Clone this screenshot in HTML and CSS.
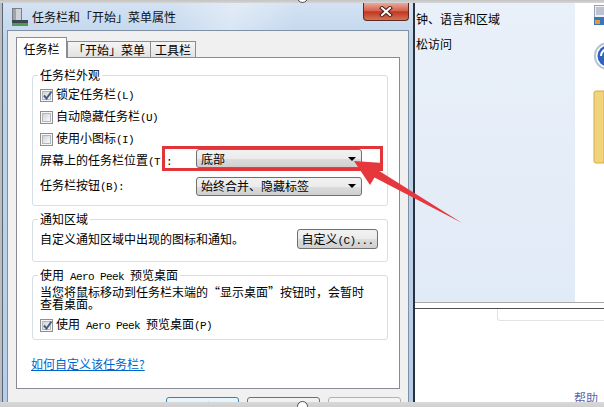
FILE: index.html
```html
<!DOCTYPE html>
<html lang="zh-CN">
<head>
    <meta charset="UTF-8">
    <meta name="viewport" content="width=device-width, initial-scale=1.0">
    <title>任务栏和「开始」菜单属性</title>
    <link rel="stylesheet" href="styles.css">
</head>
<body>
    <div class="screen">
        <div class="band-top"></div>

        <div class="desk">
            <div class="dialog">
                <div class="titlebar">
                    <svg class="app-icon" width="16" height="18" viewBox="0 0 16 18">
                        <rect x="0.5" y="0.5" width="9" height="13" fill="#cfd2d6" stroke="#7a7f86"/>
                        <rect x="1" y="1" width="3" height="12" fill="#9fa4aa"/>
                        <rect x="0" y="12" width="16" height="4" fill="#3b4550"/>
                        <rect x="0" y="15" width="16" height="3" fill="#4f9a52"/>
                    </svg>
                    <span class="title">任务栏和「开始」菜单属性</span>
                    <div class="close-btn">
                        <svg width="14" height="11" viewBox="0 0 14 11">
                            <path d="M3 2 L11 9 M11 2 L3 9" stroke="#4a1d15" stroke-width="4" stroke-linecap="square"/>
                            <path d="M3 2 L11 9 M11 2 L3 9" stroke="#fff" stroke-width="2" stroke-linecap="square"/>
                        </svg>
                    </div>
                </div>

                <div class="client">
                    <div class="tabs">
                        <div class="tab selected">任务栏</div>
                        <div class="tab">「开始」菜单</div>
                        <div class="tab last">工具栏</div>
                    </div>

                    <div class="tab-page">
                        <fieldset class="group group-look">
                            <legend>任务栏外观</legend>
                            <div class="row">
                                <span class="cb"><span class="cb-in"><svg class="tick" width="11" height="11" viewBox="0 0 11 11"><path d="M2 5.5 L4.5 8.5 L9.5 1.5" fill="none" stroke="#4b5d86" stroke-width="2"/></svg></span></span>
                                <span>锁定任务栏<span class="en">(L)</span></span>
                            </div>
                            <div class="row">
                                <span class="cb"><span class="cb-in"></span></span>
                                <span>自动隐藏任务栏<span class="en">(U)</span></span>
                            </div>
                            <div class="row">
                                <span class="cb"><span class="cb-in"></span></span>
                                <span>使用小图标<span class="en">(I)</span></span>
                            </div>
                            <div class="row field">
                                <span class="label">屏幕上的任务栏位置<span class="en">(T):</span></span>
                                <div class="combo combo-pos"><span>底部</span><i class="caret"></i></div>
                            </div>
                            <div class="row field field-buttons">
                                <span class="label">任务栏按钮<span class="en">(B):</span></span>
                                <div class="combo"><span>始终合并、隐藏标签</span><i class="caret"></i></div>
                            </div>
                        </fieldset>

                        <fieldset class="group group-notify">
                            <legend>通知区域</legend>
                            <div class="row">
                                <span>自定义通知区域中出现的图标和通知。</span>
                                <div class="btn btn-custom">自定义<span class="en">(C)...</span></div>
                            </div>
                        </fieldset>

                        <fieldset class="group group-peek">
                            <legend>使用<span class="en"> Aero Peek </span>预览桌面</legend>
                            <p class="note">当您将鼠标移动到任务栏末端的“显示桌面”按钮时，会暂时<br>查看桌面。</p>
                            <div class="row">
                                <span class="cb"><span class="cb-in"><svg class="tick" width="11" height="11" viewBox="0 0 11 11"><path d="M2 5.5 L4.5 8.5 L9.5 1.5" fill="none" stroke="#4b5d86" stroke-width="2"/></svg></span></span>
                                <span>使用<span class="en"> Aero Peek </span>预览桌面<span class="en">(P)</span></span>
                            </div>
                        </fieldset>

                        <a class="help-link" href="#">如何自定义该任务栏?</a>
                    </div>

                    <div class="buttons">
                        <div class="btn btn-default">确定</div>
                        <div class="btn">取消</div>
                        <div class="btn btn-disabled">应用<span class="en">(A)</span></div>
                    </div>
                </div>
            </div>

            <div class="cpanel">
                <div class="cp-top">
                    <div class="cp-pane">
                        <div class="cp-link">钟、语言和区域</div>
                        <div class="cp-link">松访问</div>
                    </div>
                    <div class="cp-icons">
                        <svg width="29" height="299" viewBox="0 0 29 299">
                            <rect x="19.5" y="2.5" width="10" height="12" fill="#eef0f6" stroke="#9aa3b5"/>
                            <path d="M21 5h8M21 7h8M21 9h8M21 11h8" stroke="#8c95aa" stroke-width="1"/>
                            <rect x="19" y="14" width="10" height="8" fill="#3b76b8"/>
                            <rect x="20" y="17" width="5" height="4" fill="#e39a3c"/>
                            <circle cx="33" cy="53" r="14" fill="#b7c3d4"/>
                            <circle cx="33" cy="53" r="12" fill="#ffffff"/>
                            <circle cx="33" cy="53" r="10.5" fill="#2f63bd"/>
                            <path d="M26 53 a7 7 0 0 1 7 -7" stroke="#fff" stroke-width="2" fill="none"/>
                            <path d="M21 88 h8 v72 h-8 q-2 0 -2 -2 v-68 q0 -2 2 -2z" fill="#f0d37a" stroke="#d2ac48"/>
                        </svg>
                    </div>
                </div>
                <div class="cp-rule light"></div>
                <div class="cp-gap"></div>
                <div class="cp-rule dark"></div>
                <div class="cp-bottom">
                    <div class="cp-box"></div>
                    <span class="cp-help">帮助</span>
                </div>
            </div>
        </div>

        <div class="band-bottom"></div>

        <!-- annotation drawn over the screenshot -->
        <div class="mark-box"></div>
        <svg class="arrow" width="604" height="407" viewBox="0 0 604 407">
            <polygon points="354,161 383,163 378.5,170.4 462,223 374.5,177.4 370,185" fill="#e5373c"/>
        </svg>
        <span class="handle handle-top"></span>
        <span class="handle handle-bottom"></span>
    </div>
</body>
</html>
```

FILE: styles.css
```css
* {
    box-sizing: border-box;
}

html, body {
    margin: 0;
    padding: 0;
}

body {
    font-family: "Noto Sans CJK SC", "Noto Sans", sans-serif;
    font-size: 12px;
    color: #000;
    background: #c6c6c6;
}

.screen {
    position: relative;
    width: 604px;
    height: 407px;
    overflow: hidden;
    background: #bdbdbd;
}

.band-top {
    height: 3px;
    background: linear-gradient(#c3c3c3, #d6d6d6);
}

.band-bottom {
    height: 5px;
    background: linear-gradient(#d9d9d9, #cfcfcf);
}

.desk {
    display: flex;
    height: 399px;
}

.en {
    font-family: "Liberation Mono", monospace;
    font-size: 11px;
    letter-spacing: -0.6px;
    white-space: pre;
}

/* dialog window */
.dialog {
    width: 413px;
    height: 399px;
    margin-left: 2px;
    padding: 0 4px;
    border-left: 1px solid #56677a;
    border-right: 2px solid #27323e;
    overflow: hidden;
    display: flex;
    flex-direction: column;
    background:
        linear-gradient(100deg, rgba(255,255,255,0) 35%, rgba(255,255,255,0.35) 48%, rgba(255,255,255,0) 62%),
        linear-gradient(#d3e2f3, #bfd4eb 40px, #b8cee8);
}

.titlebar {
    height: 27px;
    flex: none;
    display: flex;
    align-items: center;
    padding-left: 5px;
}

.app-icon {
    flex: none;
    margin-right: 4px;
}

.title {
    line-height: 14px;
    color: #111;
}

.close-btn {
    margin-left: auto;
    align-self: flex-start;
    width: 46px;
    height: 18px;
    border: 1px solid #5b2a22;
    border-top: none;
    border-radius: 0 0 4px 4px;
    background: linear-gradient(#eaa99a, #d5634f 45%, #c3361f 52%, #d37256);
    display: flex;
    align-items: center;
    justify-content: center;
}

.client {
    flex: 1;
    border: 1px solid #7f90a4;
    border-bottom: none;
    background: #f0f0f0;
    padding: 6px 8px 0;
}

/* tabs */
.tabs {
    display: flex;
    align-items: flex-end;
    height: 20px;
}

.tab {
    flex: none;
    height: 16px;
    width: 84px;
    padding: 0;
    border: 1px solid #898c95;
    border-bottom: none;
    background: linear-gradient(#f5f5f5, #e2e2e2);
    line-height: 15px;
    text-align: center;
    white-space: nowrap;
}

.tab.selected {
    position: relative;
    z-index: 1;
    width: 51px;
    height: 21px;
    margin-bottom: -1px;
    padding-top: 1px;
    line-height: 19px;
    background: #fff;
}

.tab.last {
    width: 45px;
    border-left: none;
}

.tab-page {
    height: 332px;
    border: 1px solid #898c95;
    background: #fff;
    padding: 10px 11px 0 15px;
}

/* group boxes */
.group {
    margin: 0;
    min-width: 0;
    border: 1px solid #d5dfe5;
    border-radius: 3px;
    padding: 2px 9px 8px 7px;
}

.group legend {
    padding: 0 2px;
    margin-left: -2px;
    line-height: 14px;
    height: 14px;
    white-space: nowrap;
}

.group-notify {
    margin-top: 6px;
    padding: 2px 9px 11px 7px;
}

.group-peek {
    margin-top: 6px;
    padding: 4px 9px 3px 7px;
}

.row {
    display: flex;
    align-items: center;
    height: 22px;
    line-height: 14px;
    white-space: nowrap;
}

.field {
    display: grid;
    grid-template-columns: 156px 166px;
}

.field-buttons {
    margin-top: 3px;
}

.note {
    margin: 0 0 4px;
    line-height: 12px;
    white-space: nowrap;
}

/* checkbox */
.cb {
    flex: none;
    width: 13px;
    height: 13px;
    margin-right: 3px;
    border: 1px solid #8e8f8f;
    background: #f6f6f6;
    padding: 1px;
}

.cb-in {
    display: block;
    width: 9px;
    height: 9px;
    border: 1px solid #b2b7bd;
    background: linear-gradient(135deg, #cfd3d8, #fafafa);
}

.tick {
    display: block;
    margin: -2px 0 0 -1px;
}

/* combo box and buttons */
.combo {
    height: 19px;
    display: flex;
    align-items: center;
    padding-left: 4px;
    border: 1px solid #707070;
    border-radius: 3px;
    background: linear-gradient(#f2f2f2, #ebebeb 50%, #dddddd 51%, #cfcfcf);
}

.combo-pos {
    align-self: start;
    margin-top: -1px;
}

.caret {
    margin-left: auto;
    margin-right: 5px;
    width: 0;
    height: 0;
    border-left: 4px solid transparent;
    border-right: 4px solid transparent;
    border-top: 4px solid #000;
}

.btn {
    flex: none;
    height: 23px;
    width: 73px;
    border: 1px solid #707070;
    border-radius: 3px;
    background: linear-gradient(#f2f2f2, #ebebeb 50%, #dddddd 51%, #cfcfcf);
    text-align: center;
    line-height: 19px;
    white-space: nowrap;
}

.btn-custom {
    margin-left: auto;
    width: 81px;
    height: 20px;
    line-height: 18px;
}

.btn-default {
    border-color: #3c7fb1;
    background: linear-gradient(#eaf6fd, #d9f0fc 50%, #bee6fd 51%, #a7d9f5);
}

.btn-disabled {
    border-color: #adb2b5;
    background: #f4f4f4;
    color: #838383;
}

.help-link {
    display: block;
    margin: 17px 0 0 -1px;
    width: max-content;
    line-height: 14px;
    color: #0066cc;
    text-decoration: underline;
}

.buttons {
    display: flex;
    justify-content: flex-end;
    gap: 8px;
    margin: 8px -1px 0 0;
}

/* control panel behind the dialog */
.cpanel {
    flex: 1;
    display: flex;
    flex-direction: column;
    overflow: hidden;
    background: #fff;
}

.cp-top {
    height: 299px;
    display: flex;
}

.cp-pane {
    width: 160px;
    padding: 9px 0 0 1px;
    background: linear-gradient(#e9f0f9, #e1eaf7);
}

.cp-link {
    line-height: 14px;
    margin-bottom: 11px;
    white-space: nowrap;
}

.cp-icons {
    flex: 1;
    background: #fff;
}

.cp-icons svg {
    display: block;
}

.cp-rule {
    height: 1px;
}

.cp-rule.light {
    background: #a9a9a9;
}

.cp-rule.dark {
    background: #4f4f4f;
}

.cp-gap {
    height: 5px;
    background: #fff;
}

.cp-bottom {
    flex: 1;
    display: flex;
    flex-direction: column;
    align-items: flex-end;
}

.cp-box {
    align-self: stretch;
    margin-left: 82px;
    height: 12px;
    border: 1px solid #e3e3e3;
    border-top: none;
    border-right: none;
    border-radius: 0 0 0 3px;
}

.cp-help {
    margin-top: auto;
    margin-right: 6px;
    margin-bottom: -3px;
    line-height: 14px;
    color: #6464aa;
}

/* annotation overlay */
.mark-box {
    position: absolute;
    left: 162px;
    top: 146px;
    width: 221px;
    height: 25px;
    border: 3px solid #e3343a;
}

.arrow {
    position: absolute;
    left: 0;
    top: 0;
    pointer-events: none;
}

.handle {
    position: absolute;
    left: 297px;
    width: 11px;
    height: 11px;
    border-radius: 50%;
    border: 1px solid #4c4c4c;
    background: #fff;
}

.handle-top {
    top: -8px;
}

.handle-bottom {
    top: 401px;
}
```
